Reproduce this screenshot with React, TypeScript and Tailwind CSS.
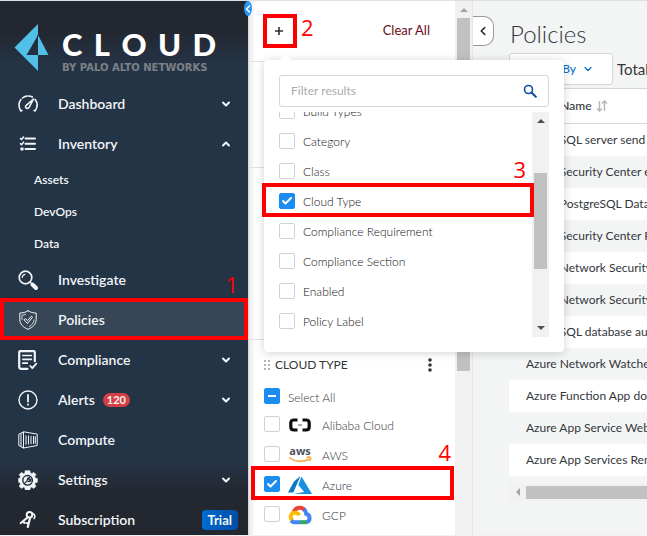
import type { ReactNode } from "react";
import { Check, ChevronDown, ChevronLeft, ChevronUp } from "lucide-react";

type IconProps = { children: ReactNode };

function NavIcon({ children }: IconProps) {
  return (
    <svg
      viewBox="0 0 20 20"
      className="h-5 w-5 shrink-0"
      fill="none"
      stroke="currentColor"
      strokeWidth="1.6"
      strokeLinecap="round"
      strokeLinejoin="round"
      aria-hidden="true"
    >
      {children}
    </svg>
  );
}

const icons = {
  dashboard: (
    <NavIcon>
      <path d="M3 17C.2 13.500.3 8.500 3 5.500" />
      <path d="M4.500 4C7.500 1.600 11.500 1.400 14.500 3" strokeDasharray="4.500 1.500" />
      <path d="M17.200 5.500C19.700 9 19.600 13.500 17 17M2.500 16.500h1.500M16 16.500h1.500" />
      <path d="M8.200 11.300 15.500 5l-4.400 8.400c-.6 1-1.900 1.300-2.800.7-1-.7-1-2-.1-2.800Z" />
    </NavIcon>
  ),
  inventory: (
    <NavIcon>
      <path d="M7.500 4.500h9.500M7.500 9.700h9.500M7.500 15h9.500" strokeWidth="2" />
      <path d="m2.500 4.500 1 1 2-2.500M2.500 9.700l1 1 2-2.500" />
      <circle cx="4" cy="15" r="1" fill="currentColor" />
    </NavIcon>
  ),
  investigate: (
    <NavIcon>
      <circle cx="7.500" cy="7.500" r="6.300" strokeWidth="1.700" />
      <path d="M4.300 7.500a3.300 3.300 0 0 1 2.700-3.200M12 12l2 2" strokeWidth="1.200" />
      <path d="m14.500 14.500 3.500 3.500" strokeWidth="4" />
    </NavIcon>
  ),
  policies: (
    <NavIcon>
      <path
        d="M10 .8c2.500 1.600 5.500 2.300 8.200 2.200v6.500c0 4.500-3.200 7.800-8.200 9.800-5-2-8.200-5.300-8.200-9.800V3C4.500 3.100 7.500 2.400 10 .8Z"
        strokeWidth="1"
      />
      <path d="M4 9.800V5.200c1.300-.1 2.600-.4 3.700-.9M16 10c-.3 3-2 5-4.500 6.500" strokeWidth=".8" />
      <path d="m6.300 9.500 1.200-.8 2 2 3.800-4.500 1.300 1-4.900 6Z" strokeWidth="1" />
    </NavIcon>
  ),
  compliance: (
    <NavIcon>
      <path d="M9.500 18.800H3.200c-1.200 0-2-.8-2-2V2.200c0-.7.400-1 1-1h13.600c.7 0 1 .4 1 1v9" strokeWidth="2.200" />
      <path d="M4.800 5.500h8.500M4.800 9.300h8.500M4.800 13.200h4.500" strokeWidth="1.700" />
      <path d="m12.300 16 2 2.200 4-4.500" strokeWidth="1.800" />
    </NavIcon>
  ),
  alerts: (
    <NavIcon>
      <circle cx="10" cy="10" r="9" strokeWidth="1.400" />
      <path d="M10 5v6.500M10 14.500v.3" strokeWidth="1.800" />
    </NavIcon>
  ),
  compute: (
    <NavIcon>
      <path
        d="M5.500 2 .8 4.200v11.300L5.500 18l13.700-2.500v-11ZM5.500 2v16M3 3.500v13M8 5.800v8.500M10.500 6v8M13 6.300v7.400M15.500 6.500v7M17.300 6.700v6.600"
        strokeWidth="1"
      />
    </NavIcon>
  ),
  settings: (
    <NavIcon>
      <path
        d="M7.300.7h4.600l.5 2.400 1.300.6 2.100-1.300 2.200 2.200-1.300 2.100.6 1.400 2.100.5v3.600l-2.100.5-.6 1.400 1.300 2.100-2.200 2.200-2.100-1.300-1.300.6-.5 2.200H7.300l-.5-2.200-1.300-.6-2.100 1.300-2.200-2.200 1.300-2.100-.6-1.400-1.300-.5V8.600l1.300-.5.6-1.400-1.300-2.100 2.200-2.200 2.100 1.300 1.300-.6Z"
        fill="currentColor"
        strokeWidth=".6"
      />
      <circle cx="9.600" cy="10.300" r="4.800" stroke="#222c39" strokeWidth="1.400" />
      <path d="m6.300 13.600 3-3c-.4-1.800.8-3.200 2.500-3l-1.200 1.500 1 1 1.500-1.200c.3 1.800-1.200 3-3 2.500" stroke="#222c39" strokeWidth="1.200" />
    </NavIcon>
  ),
  subscription: (
    <NavIcon>
      <circle cx="11.500" cy="4.700" r="2.800" strokeWidth="2" />
      <path d="M9.500 7.500 2.800 13M5 11.200l1.500 1.700M12 8l-2.200 9M10.700 13.500l-2-.5" strokeWidth="2.200" />
      <path d="M14.500 3.300c2.500 1 3 3.300 1.600 5.200" />
    </NavIcon>
  ),
};

function Callout({ n, box, label }: { n: string; box: string; label: string }) {
  return (
    <>
      <span className={`pointer-events-none absolute z-30 border-4 border-[#ff0000] ${box}`} />
      <span
        className={`pointer-events-none absolute z-30 font-['Open_Sans',sans-serif] text-[22px] leading-6 font-normal text-[#ff0000] ${label}`}
      >
        {n}
      </span>
    </>
  );
}

function NavItem({
  icon,
  label,
  arrow,
  children,
  active,
}: {
  icon: ReactNode;
  label: string;
  arrow?: "up" | "down";
  children?: ReactNode;
  active?: boolean;
}) {
  return (
    <a
      href="#"
      className={`relative flex h-10 items-center pr-4 pl-[18px] text-sm font-semibold ${active ? "bg-[#364656]" : ""}`}
    >
      {icon}
      <span className="ml-5">{label}</span>
      {children}
      {arrow === "down" && <ChevronDown className="ml-auto size-3" strokeWidth={4} />}
      {arrow === "up" && <ChevronUp className="ml-auto size-3" strokeWidth={4} />}
    </a>
  );
}

function Logo() {
  return (
    <div className="flex h-[83px] items-start pt-[23px] pl-[14px]">
      <svg viewBox="0 0 35 47" className="h-[47px] w-[35px]" aria-hidden="true">
        <path fill="#52bfe6" fillRule="evenodd" d="M24 0v11l10.500 20H24v16L.5 23.500ZM23 13 12.500 31H23Z" />
        <path d="M23.500 11v20" stroke="#22303f" strokeWidth="1" />
      </svg>
      <div className="ml-[13px] w-[154px] pt-1">
        <div className="flex justify-between text-[31px] leading-8 font-black text-white">
          <span>C</span>
          <span>L</span>
          <span>O</span>
          <span>U</span>
          <span>D</span>
        </div>
        <div className="mt-0.5 font-['DejaVu_Sans',sans-serif] text-[10px] leading-3 font-bold whitespace-nowrap text-[#7e8184]">
          BY PALO ALTO NETWORKS
        </div>
      </div>
    </div>
  );
}

function Sidebar() {
  return (
    <aside className="relative w-[248px] shrink-0 bg-linear-to-b from-[#22262e] from-5% via-[#243447] via-12% to-[#243447] text-[#f2f5f7]">
      <div className="h-full overflow-hidden bg-linear-to-b from-transparent from-86% to-[#232830] to-92%">
        <Logo />
        <nav>
          <NavItem icon={icons.dashboard} label="Dashboard" arrow="down" />
          <NavItem icon={icons.inventory} label="Inventory" arrow="up" />
          {["Assets", "DevOps", "Data"].map((s) => (
            <a key={s} href="#" className="flex h-8 items-center pl-[34px] text-xs font-semibold">
              {s}
            </a>
          ))}
          <NavItem icon={icons.investigate} label="Investigate" />
          <NavItem icon={icons.policies} label="Policies" active>
            <Callout n="1" box="inset-x-0 -top-0.5 bottom-0" label="right-2.5 -top-7" />
          </NavItem>
          <NavItem icon={icons.compliance} label="Compliance" arrow="down" />
          <NavItem icon={icons.alerts} label="Alerts" arrow="down">
            <span className="ml-2 rounded-full bg-[#d63f42] px-1 text-[11px] leading-[14px] font-bold">120</span>
          </NavItem>
          <NavItem icon={icons.compute} label="Compute" />
          <NavItem icon={icons.settings} label="Settings" arrow="down" />
          <NavItem icon={icons.subscription} label="Subscription">
            <span className="-mr-1.5 ml-auto rounded bg-linear-to-r from-[#006bd0] to-[#004da6] px-1.5 py-0.5 text-[13px] leading-4 font-bold">
              Trial
            </span>
          </NavItem>
        </nav>
      </div>
      <button
        type="button"
        aria-label="Collapse menu"
        className="absolute top-0 -right-1 z-20 flex h-[15px] w-2 items-center justify-center rounded-[50%] bg-[#2b97f0] text-white"
      >
        <ChevronLeft className="size-3 shrink-0" strokeWidth={3} />
      </button>
    </aside>
  );
}

function Tick({
  id,
  checked,
  mixed,
  children,
}: {
  id: string;
  checked?: boolean;
  mixed?: boolean;
  children: ReactNode;
}) {
  return (
    <label htmlFor={id} className="flex h-[30px] items-center">
      <span className="relative flex size-4 shrink-0">
        <input
          id={id}
          type="checkbox"
          defaultChecked={checked || mixed}
          className="size-4 appearance-none rounded-xs border border-[#d0d2d4] bg-white checked:border-[#1b8df2] checked:bg-[#1b8df2]"
        />
        {checked && <Check className="pointer-events-none absolute inset-0.5 size-3 text-white" strokeWidth={4} />}
        {mixed && <span className="pointer-events-none absolute inset-x-1 top-[7px] h-0.5 bg-white" />}
      </span>
      {children}
    </label>
  );
}

function Triangle({ dir, dark }: { dir: "up" | "down" | "left"; dark?: boolean }) {
  const d = { up: "M0 6h8L4 2Z", down: "M0 2h8L4 6Z", left: "M6 0v8L2 4Z" }[dir];
  return (
    <svg viewBox="0 0 8 8" className="size-2" fill={dark ? "#505050" : "#a3a3a3"} aria-hidden="true">
      <path d={d} />
    </svg>
  );
}

const filters = [
  "Build Types",
  "Category",
  "Class",
  "Cloud Type",
  "Compliance Requirement",
  "Compliance Section",
  "Enabled",
  "Policy Label",
];

function FilterMenu() {
  return (
    <div className="absolute top-[59px] left-[15px] z-20 w-[300px] rounded bg-white p-[15px] shadow-[0_1px_10px_rgba(0,0,0,0.18)]">
      <span className="absolute -top-1 left-4 size-2.5 rotate-45 bg-white" />
      <div className="flex h-8 items-center rounded-[3px] border border-[#d4d6d8] pr-[11px] pl-[11px]">
        <input
          type="text"
          aria-label="Filter results"
          placeholder="Filter results"
          className="min-w-0 flex-1 text-xs outline-none placeholder:text-[#a9abae]"
        />
        <svg viewBox="0 0 14 14" className="size-3.5" fill="none" stroke="#0a4fa3" aria-hidden="true">
          <circle cx="5.500" cy="5.500" r="4" strokeWidth="1.600" />
          <path d="m8.500 8.500 4.300 4.300" strokeWidth="2" strokeLinecap="round" />
        </svg>
      </div>
      <div className="mt-[5px] flex h-[225px]">
        <div className="flex-1 overflow-hidden">
          <div className="-mt-4">
            {filters.map((f) => (
              <Tick key={f} id={`filter-${f}`} checked={f === "Cloud Type"}>
                <span className="ml-2 pt-0.5 text-xs leading-4 font-light text-[#111214]">{f}</span>
              </Tick>
            ))}
          </div>
        </div>
        <div className="flex w-[17px] flex-col items-center bg-[#f1f1f1] py-[5px]">
          <Triangle dir="up" dark />
          <div className="mt-12 mb-auto h-24 w-[13px] bg-[#c1c1c1]" />
          <Triangle dir="down" dark />
        </div>
      </div>
      <Callout n="3" box="-left-0.5 right-[30px] top-[123px] h-[34px]" label="right-[38px] top-[97px]" />
    </div>
  );
}

const logos = {
  alibaba: (
    <svg viewBox="0 0 24 20" className="h-5 w-6" fill="none" aria-hidden="true">
      <path
        d="M9.500 5H6C3.500 5 2.800 6 2.800 8v4c0 2 .7 3 3.200 3h3.500M14.500 5H18c2.500 0 3.200 1 3.200 3v4c0 2-.7 3-3.200 3h-3.500"
        stroke="#0c0c0c"
        strokeWidth="3.200"
      />
      <path d="M10 10h4" stroke="#888" strokeWidth="1.400" />
    </svg>
  ),
  aws: (
    <svg viewBox="0 0 24 20" className="h-5 w-6 overflow-visible" aria-hidden="true">
      <text x="12" y="10" textAnchor="middle" fontSize="11" fontWeight="700" fill="#4c535e" fontFamily="'Open Sans', sans-serif">
        aws
      </text>
      <path d="M1 12.500c6 4.500 14 5 20 1.500M18.500 12.500c2-.5 3.500-.5 4 0s0 2-1 3.500" fill="none" stroke="#f7a43a" strokeWidth="1.500" />
    </svg>
  ),
  azure: (
    <svg viewBox="0 0 24 20" className="h-5 w-6" aria-hidden="true">
      <path d="M12.500 1 6 6.500 0 17.500h5.300Z" fill="#0b78c4" />
      <path d="m13.500 1.500-3.200 8.500 5.900 7-10.700 2H24Z" fill="#1691df" />
    </svg>
  ),
  gcp: (
    <svg viewBox="0 0 24 20" className="h-5 w-6" fill="none" strokeWidth="4" aria-hidden="true">
      <path d="M5.500 7.500C7.500 2 14 1.200 17 5.500" stroke="#e94435" />
      <path d="M16 4.500c1.500 1 2.200 2.500 2.200 4.300C22.500 10 23 16.500 18 17.200" stroke="#4285f4" />
      <path d="M18.500 17.200H12" stroke="#34a853" />
      <path d="M4.500 15.500C1 12.500 3 7.800 7 7.800c2 0 3.500 1 4.300 2.500" stroke="#fbbc05" />
      <path d="M12.500 17.200H6.500c-1.500 0-2.500-.6-3.300-1.500" stroke="#4285f4" />
    </svg>
  ),
};

const clouds = [
  { name: "Alibaba Cloud", logo: logos.alibaba },
  { name: "AWS", logo: logos.aws },
  { name: "Azure", logo: logos.azure, checked: true },
  { name: "GCP", logo: logos.gcp },
];

function FilterPanel() {
  return (
    <section className="relative flex w-[225px] shrink-0 border-r border-[#e3e6e7] border-l border-l-[#d8d8d8] bg-white">
      <div className="min-w-0 flex-1 bg-linear-to-r from-[#e9e9e9] to-transparent to-[6px]">
        <header className="relative flex h-[61px] items-center justify-between border-b border-[#e3e3e3] pr-[25px] pl-4 text-[13px]">
          <button type="button" aria-label="Add filter" className="flex w-7 justify-center">
            <svg viewBox="0 0 10 10" className="size-2.5" aria-hidden="true">
              <path d="M1 5h8M5 1v8" stroke="#333" strokeWidth="1.600" />
            </svg>
          </button>
          <button type="button" className="text-[#6b0a18]">
            Clear All
          </button>
          <Callout n="2" box="left-[14px] top-[13px] size-[34px]" label="left-[52px] top-3.5" />
        </header>
        <div className="h-[106px] border-b border-[#e3e3e3]" />
        <div className="h-[172px] border-b border-[#e3e3e3]" />
        <fieldset aria-label="Cloud type" className="relative pl-[15px]">
          <div className="flex h-[41px] items-center pt-2 pr-[23px]">
            <svg viewBox="0 0 8 10" className="h-2.5 w-2" fill="#b5b5b5" aria-hidden="true">
              <path d="M0 0h2v2H0zM4 0h2v2H4zM0 4h2v2H0zM4 4h2v2H4zM0 8h2v2H0zM4 8h2v2H4z" />
            </svg>
            <h2 className="ml-[3px] text-xs text-[#33363b]">CLOUD TYPE</h2>
            <button type="button" aria-label="More" className="ml-auto">
              <svg viewBox="0 0 4 14" className="h-3.5 w-1" fill="#333" aria-hidden="true">
                <circle cx="2" cy="2" r="1.800" />
                <circle cx="2" cy="7" r="1.800" />
                <circle cx="2" cy="12" r="1.800" />
              </svg>
            </button>
          </div>
          <Tick id="cloud-all" mixed>
            <span className="ml-2 pt-1 text-xs leading-4 font-light text-[#33363a]">Select All</span>
          </Tick>
          <div className="-mt-0.5">
            {clouds.map((c) => (
              <Tick key={c.name} id={`cloud-${c.name}`} checked={c.checked}>
                <span className="ml-2 pt-0.5">{c.logo}</span>
                <span className="ml-2.5 pt-1 text-xs leading-4 font-light text-[#33363a]">{c.name}</span>
              </Tick>
            ))}
          </div>
          <Callout n="4" box="left-0.5 right-px top-[126px] h-[34px]" label="right-1 top-[100px]" />
        </fieldset>
      </div>
      <div className="flex w-[17px] flex-col items-center bg-[#f1f1f1] pt-[5px]">
        <Triangle dir="up" />
        <div className="mt-1 h-[353px] w-[13px] bg-[#c1c1c1]" />
      </div>
      <FilterMenu />
    </section>
  );
}

const policies = [
  "Azure SQL server send alerts",
  "Azure Security Center email",
  "Azure PostgreSQL Database",
  "Azure Security Center Policy",
  "Azure Network Security",
  "Azure Network Security",
  "Azure SQL database auditing",
  "Azure Network Watcher",
  "Azure Function App doesn't",
  "Azure App Service Web app",
  "Azure App Services Remote",
];

function Policies() {
  return (
    <main className="min-w-0 flex-1 overflow-hidden bg-[#f3f5f5] text-[#33363b]">
      <div className="flex pt-[15px]">
        <button
          type="button"
          aria-label="Collapse filters"
          className="flex h-[30px] w-[21px] items-center justify-center rounded-r-[10px] border border-l-0 border-[#98999b] bg-white"
        >
          <ChevronLeft className="size-3.5 text-[#222]" strokeWidth={2.6} />
        </button>
        <h1 className="ml-4 pt-0.5 text-2xl leading-8 font-light">Policies</h1>
      </div>
      <div className="pl-9">
        <div className="mt-[3px] flex h-8 items-center">
          <button
            type="button"
            className="flex h-8 w-[104px] shrink-0 items-center justify-between rounded-[3px] border border-[#d4d6d8] bg-white pr-[18px] pl-4 text-xs font-medium whitespace-nowrap text-[#0b6fc9]"
          >
            Group By
            <ChevronDown className="size-3" strokeWidth={2.6} />
          </button>
          <span className="ml-1 text-[15px]">Total</span>
        </div>
        <table className="mt-[3px] w-full border-collapse text-left text-xs whitespace-nowrap">
          <thead>
            <tr className="h-[35px] border-y border-[#d4d6d8] bg-white">
              <th className="pl-[17px] font-medium">
                <span className="flex items-center gap-1">
                  Policy Name
                  <svg viewBox="0 0 12 12" className="size-3" fill="none" stroke="#b3b5b7" strokeWidth="1.400" aria-hidden="true">
                    <path d="M3.500 1v10M1 8.500 3.500 11 6 8.500M8.500 11V1M6 3.500 8.500 1 11 3.500" />
                  </svg>
                </span>
              </th>
            </tr>
          </thead>
          <tbody>
            {policies.map((p, i) => (
              <tr key={i} className="h-8 odd:bg-white">
                <td className="max-w-0 overflow-hidden pl-[17px]">{p}</td>
              </tr>
            ))}
          </tbody>
        </table>
        <div className="mt-2 flex h-[17px] items-center bg-[#f1f1f1]">
          <span className="flex w-[17px] justify-center">
            <Triangle dir="left" />
          </span>
          <div className="h-[13px] flex-1 bg-[#c1c1c1]" />
        </div>
      </div>
    </main>
  );
}

export default function App() {
  return (
    <div className="flex h-screen overflow-hidden border-t border-b border-t-[#dcdfe3] border-b-[#f0f0f0] font-[Lato,sans-serif]">
      <Sidebar />
      <FilterPanel />
      <Policies />
    </div>
  );
}
